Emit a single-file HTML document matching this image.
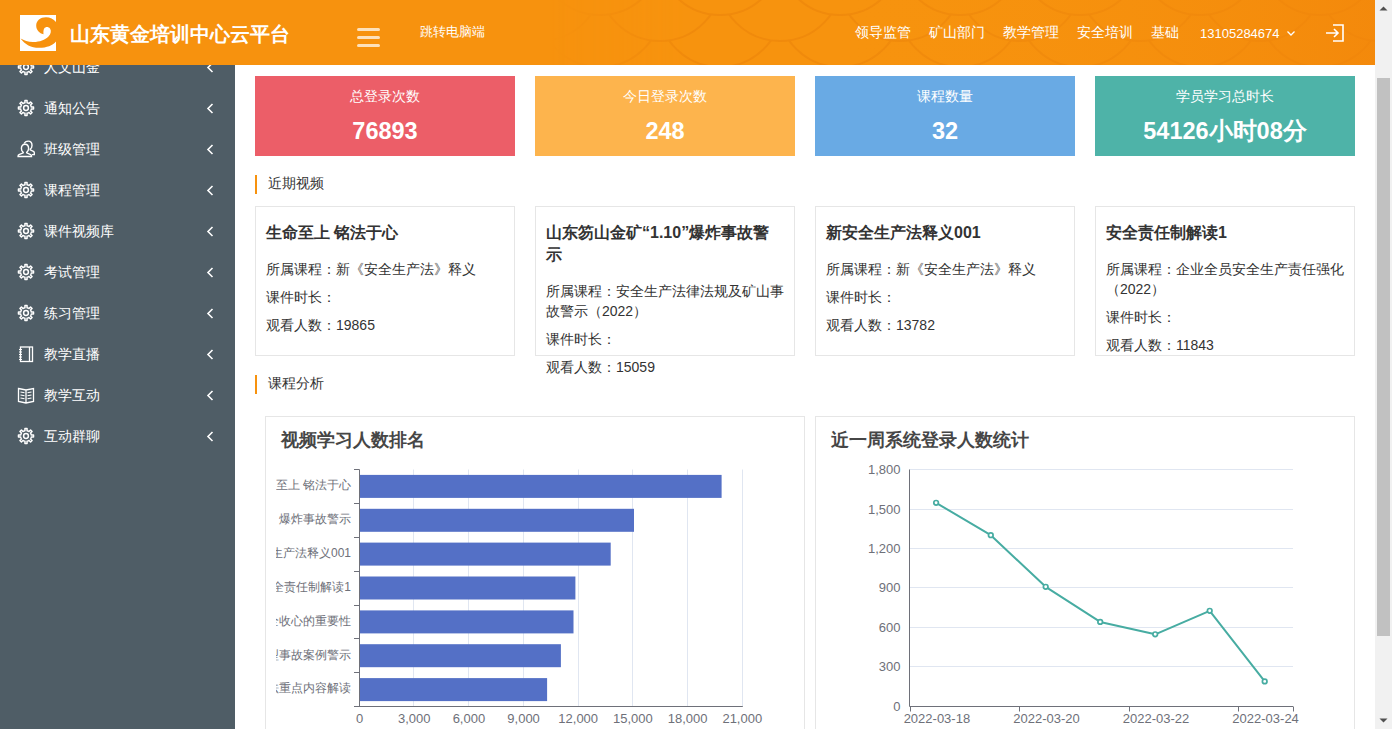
<!DOCTYPE html>
<html><head><meta charset="utf-8">
<style>
*{box-sizing:border-box;margin:0;padding:0}
html,body{width:1392px;height:729px;overflow:hidden;background:#fff}
body{position:relative;font-family:"Liberation Sans",sans-serif;color:#333;font-size:14px}
.abs{position:absolute}
#header{left:0;top:0;width:1375px;height:65px;background:#F7920E;overflow:hidden;z-index:5}
#sidebar{left:0;top:0;width:235px;height:729px;background:#4F5D66;overflow:hidden}
.nav{color:#fff;font-size:14px;line-height:20px;white-space:nowrap;font-weight:500}
.si{position:absolute;left:0;width:235px;height:41px}
.si .ic{position:absolute;left:17px;top:11px;width:18px;height:18px}
.si .tx{position:absolute;left:44px;top:10px;color:#fff;font-size:14px;line-height:20px;white-space:nowrap;font-weight:500}
.si .ch{position:absolute;left:206px;top:15px;width:8px;height:11px}
.stat{position:absolute;top:76px;width:260px;height:80px;color:#fff;text-align:center}
.stat .t{position:absolute;left:0;right:0;top:86px;font-size:14px;line-height:20px}
.stat .n{position:absolute;left:0;right:0;font-size:23.5px;font-weight:bold;line-height:28px}
.sec{position:absolute;left:255px;height:19px;border-left:2px solid #F7920E}
.sec span{position:absolute;left:11px;top:-1px;font-size:14px;line-height:19px;color:#333;white-space:nowrap}
.vc{position:absolute;top:206px;width:260px;height:150px;border:1px solid #e6e6e6;padding:0 10px;overflow:visible}
.vc h4{font-size:16px;font-weight:bold;line-height:22px;margin-top:14.6px;margin-bottom:15.4px;color:#333}
.vc p{font-size:14px;line-height:20px;margin-bottom:8px;color:#333}
.panel{position:absolute;top:416px;width:540px;height:330px;border:1px solid #e6e6e6}
.ptitle{position:absolute;font-size:18px;font-weight:bold;line-height:24px;color:#464646;white-space:nowrap}
.lbl{font-size:12px;fill:#6E7079;font-family:"Liberation Sans",sans-serif}
.lbn{font-size:13px;fill:#6E7079;font-family:"Liberation Sans",sans-serif}
</style></head><body>

<div id="sidebar" class="abs">
  <div class="si" style="top:47px">
    <svg class="ic" viewBox="0 0 18 18"><use href="#gear"/></svg>
    <div class="tx">人文山金</div>
    <svg class="ch" viewBox="0 0 8 11"><path d="M6.5 1 L2 5.5 L6.5 10" fill="none" stroke="#fff" stroke-width="1.6"/></svg>
  </div>
  <div class="si" style="top:88px">
    <svg class="ic" viewBox="0 0 18 18"><use href="#gear"/></svg>
    <div class="tx">通知公告</div>
    <svg class="ch" viewBox="0 0 8 11"><path d="M6.5 1 L2 5.5 L6.5 10" fill="none" stroke="#fff" stroke-width="1.6"/></svg>
  </div>
  <div class="si" style="top:129px">
    <svg class="ic" viewBox="0 0 18 18"><path d="M8 4.2C5.7 4.2 4.4 6 4.4 8.5C4.4 10.3 5.2 11.6 6.2 12.3L6.2 12.9L2 14.6C1.3 14.9 1.1 15.4 1.1 16V16.5H14.5V16C14.5 15.4 14.2 14.9 13.6 14.6L9.7 12.9V12.3C10.7 11.6 11.6 10.3 11.6 8.5C11.6 6 10.3 4.2 8 4.2Z" fill="none" stroke="#fff" stroke-width="1.4"/><path d="M7.2 3.6C7.8 2 9.3 1.1 11.2 1.1C13.5 1.1 15 2.9 15 5.4C15 7.2 14.2 8.5 13.2 9.2V9.8L16.4 11.4C17 11.7 17.3 12.2 17.3 12.8V14.6H15" fill="none" stroke="#fff" stroke-width="1.4"/></svg>
    <div class="tx">班级管理</div>
    <svg class="ch" viewBox="0 0 8 11"><path d="M6.5 1 L2 5.5 L6.5 10" fill="none" stroke="#fff" stroke-width="1.6"/></svg>
  </div>
  <div class="si" style="top:170px">
    <svg class="ic" viewBox="0 0 18 18"><use href="#gear"/></svg>
    <div class="tx">课程管理</div>
    <svg class="ch" viewBox="0 0 8 11"><path d="M6.5 1 L2 5.5 L6.5 10" fill="none" stroke="#fff" stroke-width="1.6"/></svg>
  </div>
  <div class="si" style="top:211px">
    <svg class="ic" viewBox="0 0 18 18"><use href="#gear"/></svg>
    <div class="tx">课件视频库</div>
    <svg class="ch" viewBox="0 0 8 11"><path d="M6.5 1 L2 5.5 L6.5 10" fill="none" stroke="#fff" stroke-width="1.6"/></svg>
  </div>
  <div class="si" style="top:252px">
    <svg class="ic" viewBox="0 0 18 18"><use href="#gear"/></svg>
    <div class="tx">考试管理</div>
    <svg class="ch" viewBox="0 0 8 11"><path d="M6.5 1 L2 5.5 L6.5 10" fill="none" stroke="#fff" stroke-width="1.6"/></svg>
  </div>
  <div class="si" style="top:293px">
    <svg class="ic" viewBox="0 0 18 18"><use href="#gear"/></svg>
    <div class="tx">练习管理</div>
    <svg class="ch" viewBox="0 0 8 11"><path d="M6.5 1 L2 5.5 L6.5 10" fill="none" stroke="#fff" stroke-width="1.6"/></svg>
  </div>
  <div class="si" style="top:334px">
    <svg class="ic" viewBox="0 0 18 18"><rect x="3.5" y="2" width="12" height="14.5" fill="none" stroke="#fff" stroke-width="1.3"/><line x1="12.5" y1="2" x2="12.5" y2="16.5" stroke="#fff" stroke-width="1.3"/><path d="M2 4.5h3M2 7h3M2 9.5h3M2 12h3M2 14.5h3" stroke="#fff" stroke-width="1"/></svg>
    <div class="tx">教学直播</div>
    <svg class="ch" viewBox="0 0 8 11"><path d="M6.5 1 L2 5.5 L6.5 10" fill="none" stroke="#fff" stroke-width="1.6"/></svg>
  </div>
  <div class="si" style="top:375px">
    <svg class="ic" viewBox="0 0 18 18"><path d="M1.5 2.5 L9 4 L16.5 2.5 V15.5 L9 17 L1.5 15.5 Z M9 4 V17" fill="none" stroke="#fff" stroke-width="1.3"/><path d="M3.5 6l4 .8M3.5 9l4 .8M3.5 12l4 .8M14.5 6l-4 .8M14.5 9l-4 .8M14.5 12l-4 .8" stroke="#fff" stroke-width="1.1"/></svg>
    <div class="tx">教学互动</div>
    <svg class="ch" viewBox="0 0 8 11"><path d="M6.5 1 L2 5.5 L6.5 10" fill="none" stroke="#fff" stroke-width="1.6"/></svg>
  </div>
  <div class="si" style="top:416px">
    <svg class="ic" viewBox="0 0 18 18"><use href="#gear"/></svg>
    <div class="tx">互动群聊</div>
    <svg class="ch" viewBox="0 0 8 11"><path d="M6.5 1 L2 5.5 L6.5 10" fill="none" stroke="#fff" stroke-width="1.6"/></svg>
  </div>
</div>

<svg width="0" height="0" style="position:absolute">
  <defs>
    <g id="gear"><path d="M14.09 7.20 L14.30 7.97 L16.53 7.94 L16.53 10.06 L14.30 10.03 L14.09 10.80 L13.87 11.32 L13.48 12.02 L15.07 13.57 L13.57 15.07 L12.02 13.48 L11.32 13.87 L10.80 14.09 L10.03 14.30 L10.06 16.53 L7.94 16.53 L7.97 14.30 L7.20 14.09 L6.68 13.87 L5.98 13.48 L4.43 15.07 L2.93 13.57 L4.52 12.02 L4.13 11.32 L3.91 10.80 L3.70 10.03 L1.47 10.06 L1.47 7.94 L3.70 7.97 L3.91 7.20 L4.13 6.68 L4.52 5.98 L2.93 4.43 L4.43 2.93 L5.98 4.52 L6.68 4.13 L7.20 3.91 L7.97 3.70 L7.94 1.47 L10.06 1.47 L10.03 3.70 L10.80 3.91 L11.32 4.13 L12.02 4.52 L13.57 2.93 L15.07 4.43 L13.48 5.98 L13.87 6.68Z" fill="none" stroke="#fff" stroke-width="1.5" stroke-linejoin="round"/><circle cx="9" cy="9" r="2.4" fill="none" stroke="#fff" stroke-width="1.5"/></g>
  </defs>
</svg>

<div id="header" class="abs">
  <svg class="abs" style="left:0;top:0" width="1375" height="65"><defs><linearGradient id="hg" x1="0" x2="1"><stop offset="0" stop-color="#F7930E" stop-opacity="0"/><stop offset="0.6" stop-color="#F7930E" stop-opacity="0"/><stop offset="1" stop-color="#F2850A" stop-opacity="0.7"/></linearGradient><linearGradient id="mk" x1="0" x2="1"><stop offset="0.4" stop-color="#fff" stop-opacity="0"/><stop offset="0.5" stop-color="#fff" stop-opacity="1"/></linearGradient><mask id="tm"><rect width="1375" height="65" fill="url(#mk)"/></mask></defs><g mask="url(#tm)" fill="#F7930E" stroke="#F08A0C" stroke-width="2"><circle cx="480" cy="109" r="62"/><circle cx="600" cy="109" r="62"/><circle cx="720" cy="109" r="62"/><circle cx="840" cy="109" r="62"/><circle cx="960" cy="109" r="62"/><circle cx="1080" cy="109" r="62"/><circle cx="1200" cy="109" r="62"/><circle cx="1320" cy="109" r="62"/><circle cx="1440" cy="109" r="62"/><circle cx="1560" cy="109" r="62"/><circle cx="540" cy="83" r="62"/><circle cx="660" cy="83" r="62"/><circle cx="780" cy="83" r="62"/><circle cx="900" cy="83" r="62"/><circle cx="1020" cy="83" r="62"/><circle cx="1140" cy="83" r="62"/><circle cx="1260" cy="83" r="62"/><circle cx="1380" cy="83" r="62"/><circle cx="1500" cy="83" r="62"/><circle cx="1620" cy="83" r="62"/><circle cx="480" cy="57" r="62"/><circle cx="600" cy="57" r="62"/><circle cx="720" cy="57" r="62"/><circle cx="840" cy="57" r="62"/><circle cx="960" cy="57" r="62"/><circle cx="1080" cy="57" r="62"/><circle cx="1200" cy="57" r="62"/><circle cx="1320" cy="57" r="62"/><circle cx="1440" cy="57" r="62"/><circle cx="1560" cy="57" r="62"/><circle cx="540" cy="31" r="62"/><circle cx="660" cy="31" r="62"/><circle cx="780" cy="31" r="62"/><circle cx="900" cy="31" r="62"/><circle cx="1020" cy="31" r="62"/><circle cx="1140" cy="31" r="62"/><circle cx="1260" cy="31" r="62"/><circle cx="1380" cy="31" r="62"/><circle cx="1500" cy="31" r="62"/><circle cx="1620" cy="31" r="62"/><circle cx="480" cy="5" r="62"/><circle cx="600" cy="5" r="62"/><circle cx="720" cy="5" r="62"/><circle cx="840" cy="5" r="62"/><circle cx="960" cy="5" r="62"/><circle cx="1080" cy="5" r="62"/><circle cx="1200" cy="5" r="62"/><circle cx="1320" cy="5" r="62"/><circle cx="1440" cy="5" r="62"/><circle cx="1560" cy="5" r="62"/><circle cx="540" cy="-21" r="62"/><circle cx="660" cy="-21" r="62"/><circle cx="780" cy="-21" r="62"/><circle cx="900" cy="-21" r="62"/><circle cx="1020" cy="-21" r="62"/><circle cx="1140" cy="-21" r="62"/><circle cx="1260" cy="-21" r="62"/><circle cx="1380" cy="-21" r="62"/><circle cx="1500" cy="-21" r="62"/><circle cx="1620" cy="-21" r="62"/><circle cx="480" cy="-47" r="62"/><circle cx="600" cy="-47" r="62"/><circle cx="720" cy="-47" r="62"/><circle cx="840" cy="-47" r="62"/><circle cx="960" cy="-47" r="62"/><circle cx="1080" cy="-47" r="62"/><circle cx="1200" cy="-47" r="62"/><circle cx="1320" cy="-47" r="62"/><circle cx="1440" cy="-47" r="62"/><circle cx="1560" cy="-47" r="62"/></g><rect width="1375" height="65" fill="url(#hg)"/></svg>
  <div class="abs" style="left:20px;top:15px;width:36px;height:36px;background:#fff">
    <svg width="36" height="36" viewBox="0 0 36 36"><path d="M0.5 23.5C4 25.5 8 26.8 13 27C19 27.2 25 25 28.5 21.5C31 19 31.5 15.5 30 13.5C28.5 11.5 25.5 11.5 24.2 13.5C23.3 15 23.4 17.5 23.5 19.2C19.5 18.5 16.2 15 16.2 10.5C16.2 5.5 20.5 2.2 26 2.2C30 2.2 33.5 4 36 7V26.5C32.5 30.5 27 32.8 19 32.8C11 32.8 5 29.5 0.5 23.5Z" fill="#F7920E"/></svg>
  </div>
  <div class="abs" style="left:70px;top:21px;font-size:20px;font-weight:bold;color:#fff;line-height:27px;white-space:nowrap">山东黄金培训中心云平台</div>
  <div class="abs" style="left:357px;top:28px;width:23px;height:3px;border-radius:2px;background:rgba(255,255,255,.72)"></div>
  <div class="abs" style="left:357px;top:35.5px;width:23px;height:3px;border-radius:2px;background:rgba(255,255,255,.72)"></div>
  <div class="abs" style="left:357px;top:44px;width:23px;height:3px;border-radius:2px;background:rgba(255,255,255,.72)"></div>
  <div class="abs nav" style="left:420px;top:22px;font-size:13px">跳转电脑端</div>
  <div class="abs nav" style="left:855px;top:22px">领导监管</div>
  <div class="abs nav" style="left:929px;top:22px">矿山部门</div>
  <div class="abs nav" style="left:1003px;top:22px">教学管理</div>
  <div class="abs nav" style="left:1077px;top:22px">安全培训</div>
  <div class="abs nav" style="left:1151px;top:22px">基础</div>
  <div class="abs nav" style="left:1200px;top:24px;font-size:13px">13105284674</div>
  <svg class="abs" style="left:1286px;top:30px" width="10" height="7" viewBox="0 0 10 7"><path d="M1.5 1.5 L5 5 L8.5 1.5" fill="none" stroke="#fff" stroke-width="1.3"/></svg>
  <svg class="abs" style="left:1325px;top:24px" width="20" height="18" viewBox="0 0 20 18"><path d="M8 1H18V17H8" fill="none" stroke="#fff" stroke-width="1.6"/><path d="M1 9H13M9 5L13 9L9 13" fill="none" stroke="#fff" stroke-width="1.6"/></svg>
</div>

<!-- stats -->
<div class="stat" style="left:255px;background:#EC5E68"><div class="t" style="top:10px">总登录次数</div><div class="n" style="top:41px">76893</div></div>
<div class="stat" style="left:535px;background:#FDB44D"><div class="t" style="top:10px">今日登录次数</div><div class="n" style="top:41px">248</div></div>
<div class="stat" style="left:815px;background:#69AAE4"><div class="t" style="top:10px">课程数量</div><div class="n" style="top:41px">32</div></div>
<div class="stat" style="left:1095px;background:#4EB3A8"><div class="t" style="top:10px">学员学习总时长</div><div class="n" style="top:41px">54126小时08分</div></div>

<div class="sec" style="top:175px"><span>近期视频</span></div>

<div class="vc" style="left:255px"><h4>生命至上 铭法于心</h4><p>所属课程：新《安全生产法》释义</p><p>课件时长：</p><p>观看人数：19865</p></div>
<div class="vc" style="left:535px"><h4>山东笏山金矿“1.10”爆炸事故警<br>示</h4><p>所属课程：安全生产法律法规及矿山事<br>故警示（2022）</p><p>课件时长：</p><p>观看人数：15059</p></div>
<div class="vc" style="left:815px"><h4>新安全生产法释义001</h4><p>所属课程：新《安全生产法》释义</p><p>课件时长：</p><p>观看人数：13782</p></div>
<div class="vc" style="left:1095px"><h4>安全责任制解读1</h4><p>所属课程：企业全员安全生产责任强化<br>（2022）</p><p>课件时长：</p><p>观看人数：11843</p></div>

<div class="sec" style="top:375px"><span>课程分析</span></div>

<div class="panel" style="left:265px"></div>
<div class="panel" style="left:815px"></div>

<!--CHARTS--><div id="charts">
<svg class="abs" style="left:0;top:0" width="1392" height="729" viewBox="0 0 1392 729">
<defs><clipPath id="lc"><rect x="276" y="417" width="528" height="312"/></clipPath></defs>
<path d="M413.5 469.5V706.5 M468.5 469.5V706.5 M523.5 469.5V706.5 M578.5 469.5V706.5 M632.5 469.5V706.5 M687.5 469.5V706.5 M742.5 469.5V706.5" stroke="#E0E6F1" stroke-width="1" fill="none"/>
<rect x="359.5" y="474.9" width="362.1" height="23" fill="#5470C6"/>
<rect x="359.5" y="508.8" width="274.5" height="23" fill="#5470C6"/>
<rect x="359.5" y="542.6" width="251.2" height="23" fill="#5470C6"/>
<rect x="359.5" y="576.5" width="215.9" height="23" fill="#5470C6"/>
<rect x="359.5" y="610.4" width="214.0" height="23" fill="#5470C6"/>
<rect x="359.5" y="644.2" width="201.4" height="23" fill="#5470C6"/>
<rect x="359.5" y="678.1" width="187.6" height="23" fill="#5470C6"/>
<path d="M359.5 469.5V706.5 M354 706.5H742.8 M354 469.5H359.5 M354 503.5H359.5 M354 537.5H359.5 M354 571.5H359.5 M354 605.5H359.5 M354 638.5H359.5 M354 672.5H359.5" stroke="#6E7079" stroke-width="1" fill="none"/>
<g clip-path="url(#lc)">
<text x="351" y="489.2" text-anchor="end" class="lbl">生命至上 铭法于心</text>
<text x="351" y="523.1" text-anchor="end" class="lbl">山东笏山金矿“1.10” 爆炸事故警示</text>
<text x="351" y="556.9" text-anchor="end" class="lbl">新安全生产法释义001</text>
<text x="351" y="590.8" text-anchor="end" class="lbl">安全责任制解读1</text>
<text x="351" y="624.7" text-anchor="end" class="lbl">节后复工安全收心的重要性</text>
<text x="351" y="658.5" text-anchor="end" class="lbl">矿山典型事故案例警示</text>
<text x="351" y="692.4" text-anchor="end" class="lbl">新安全生产法重点内容解读</text>
</g>
<text x="359.5" y="723.2" text-anchor="middle" class="lbn">0</text>
<text x="414.2" y="723.2" text-anchor="middle" class="lbn">3,000</text>
<text x="468.9" y="723.2" text-anchor="middle" class="lbn">6,000</text>
<text x="523.6" y="723.2" text-anchor="middle" class="lbn">9,000</text>
<text x="578.2" y="723.2" text-anchor="middle" class="lbn">12,000</text>
<text x="632.9" y="723.2" text-anchor="middle" class="lbn">15,000</text>
<text x="687.6" y="723.2" text-anchor="middle" class="lbn">18,000</text>
<text x="742.3" y="723.2" text-anchor="middle" class="lbn">21,000</text>
<path d="M909.5 469.5H1293 M909.5 509.5H1293 M909.5 548.5H1293 M909.5 587.5H1293 M909.5 627.5H1293 M909.5 666.5H1293" stroke="#E0E6F1" stroke-width="1" fill="none"/>
<path d="M909.5 469.5V706.5 M909.5 706.5H1293 M910.5 706.5V711.5 M1019.5 706.5V711.5 M1129.5 706.5V711.5 M1238.5 706.5V711.5 M1293.5 706.5V711.5" stroke="#6E7079" stroke-width="1" fill="none"/>
<text x="900.5" y="711.1" text-anchor="end" class="lbn">0</text>
<text x="900.5" y="671.1" text-anchor="end" class="lbn">300</text>
<text x="900.5" y="632.1" text-anchor="end" class="lbn">600</text>
<text x="900.5" y="592.1" text-anchor="end" class="lbn">900</text>
<text x="900.5" y="553.1" text-anchor="end" class="lbn">1,200</text>
<text x="900.5" y="514.1" text-anchor="end" class="lbn">1,500</text>
<text x="900.5" y="474.1" text-anchor="end" class="lbn">1,800</text>
<text x="936.9" y="723.2" text-anchor="middle" class="lbn">2022-03-18</text>
<text x="1046.5" y="723.2" text-anchor="middle" class="lbn">2022-03-20</text>
<text x="1156.0" y="723.2" text-anchor="middle" class="lbn">2022-03-22</text>
<text x="1265.6" y="723.2" text-anchor="middle" class="lbn">2022-03-24</text>
<path d="M936.1 502.8 L990.8 535.2 L1045.7 586.8 L1100.2 621.9 L1155.2 634.3 L1209.7 610.8 L1264.7 681.4" stroke="#47ACA2" stroke-width="2" fill="none" stroke-linejoin="bevel"/>
<circle cx="936.1" cy="502.8" r="2.3" fill="#fff" stroke="#47ACA2" stroke-width="1.7"/>
<circle cx="990.8" cy="535.2" r="2.3" fill="#fff" stroke="#47ACA2" stroke-width="1.7"/>
<circle cx="1045.7" cy="586.8" r="2.3" fill="#fff" stroke="#47ACA2" stroke-width="1.7"/>
<circle cx="1100.2" cy="621.9" r="2.3" fill="#fff" stroke="#47ACA2" stroke-width="1.7"/>
<circle cx="1155.2" cy="634.3" r="2.3" fill="#fff" stroke="#47ACA2" stroke-width="1.7"/>
<circle cx="1209.7" cy="610.8" r="2.3" fill="#fff" stroke="#47ACA2" stroke-width="1.7"/>
<circle cx="1264.7" cy="681.4" r="2.3" fill="#fff" stroke="#47ACA2" stroke-width="1.7"/>
</svg>
<div class="ptitle" style="left:281px;top:428px">视频学习人数排名</div>
<div class="ptitle" style="left:831px;top:428px">近一周系统登录人数统计</div>
</div><!--/CHARTS-->

<!-- scrollbar -->
<div class="abs" style="left:1375px;top:0;width:17px;height:729px;background:#F1F1F1"></div>
<div class="abs" style="left:1377px;top:78px;width:13px;height:558px;background:#C1C1C1"></div>
<svg class="abs" style="left:1375px;top:0" width="17" height="17" viewBox="0 0 17 17"><path d="M4.5 10.5 L8.5 6.5 L12.5 10.5Z" fill="#505050"/></svg>
<svg class="abs" style="left:1375px;top:712px" width="17" height="17" viewBox="0 0 17 17"><path d="M4.5 6.5 L8.5 10.5 L12.5 6.5Z" fill="#505050"/></svg>

</body></html>
